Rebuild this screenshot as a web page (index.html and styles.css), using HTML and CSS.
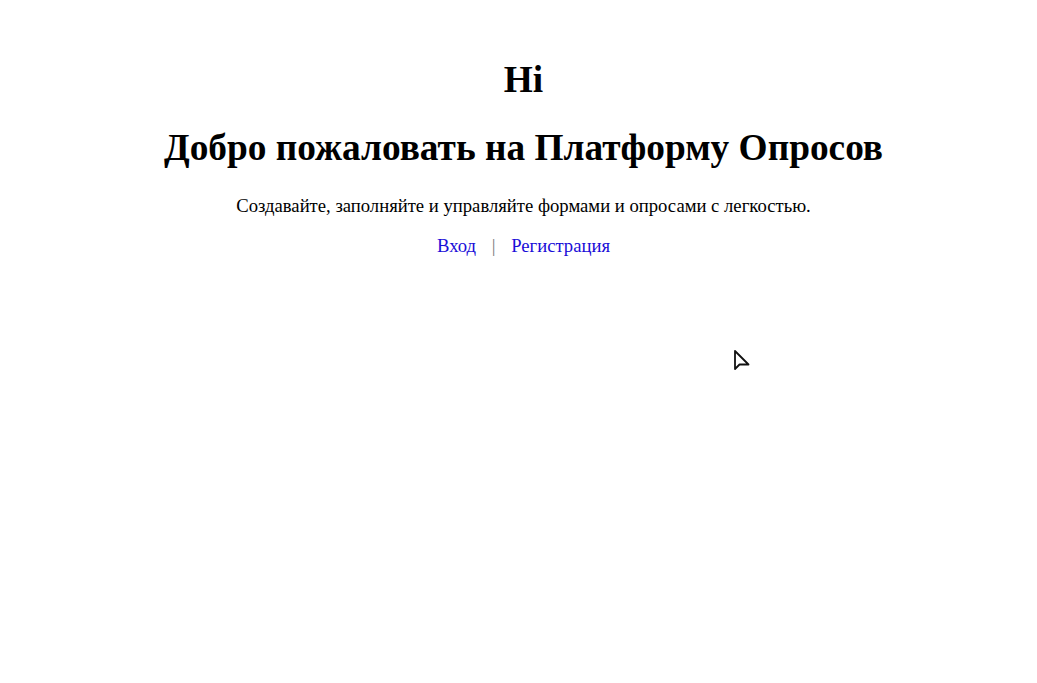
FILE: index.html
```html
<!DOCTYPE html>
<html lang="ru">
<head>
<meta charset="utf-8">
<title>Платформа Опросов</title>
<link rel="stylesheet" href="styles.css">
</head>
<body>
<main class="home">
  <h1 class="greet">Hi</h1>
  <h1 class="title">Добро пожаловать на Платформу Опросов</h1>
  <p class="lead">Создавайте, заполняйте и управляйте формами и опросами с легкостью.</p>
  <nav class="links">
    <a href="#" class="link">Вход</a>
    <span class="sep">|</span>
    <a href="#" class="link">Регистрация</a>
  </nav>
</main>
<svg class="cursor" width="20" height="26" viewBox="0 0 20 26"><path d="M2 2 L2 20 L6.5 15.5 L15.5 15.5 Z" fill="#fff" stroke="#111" stroke-width="1.8" stroke-linejoin="round"/></svg>
</body>
</html>
```
FILE: styles.css
```css
body {
  margin: 9px;
  font-family: "Liberation Serif", "Times New Roman", serif;
  color: #000;
  background: #fff;
}
.home {
  text-align: center;
  padding: 24px 0 0 10px;
}
.greet, .title {
  font-size: 37.33px;
  font-weight: bold;
  margin: 25px 0;
}
.lead {
  font-size: 18.67px;
  margin: 26px 0 17.67px;
}
.links {
  font-size: 18.67px;
  margin: 17.67px 0;
}
.link {
  color: #1a0dd8;
  text-decoration: none;
}
.sep {
  color: #777;
  margin: 0 11px;
}
.cursor {
  position: absolute;
  left: 733px;
  top: 349px;
}
```
